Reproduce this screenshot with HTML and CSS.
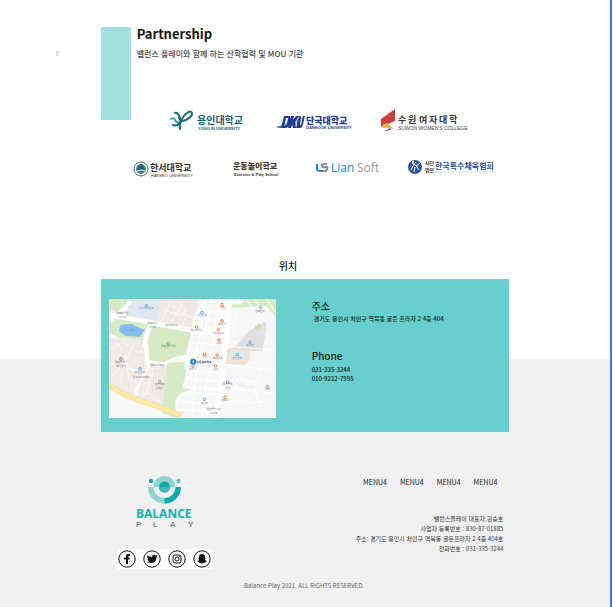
FILE: index.html
```
<!DOCTYPE html>
<html lang="ko">
<head>
<meta charset="utf-8">
<title>Balance Play</title>
<link rel="stylesheet" href="styles.css">
</head>
<body>
<main>
  <section class="partners wrap">
    <span class="stray">▯</span>
    <header class="intro">
      <div class="block"></div>
      <div>
        <h1>Partnership</h1>
        <p class="lead">밸런스 플레이와 함께 하는 산학협력 및 MOU 기관</p>
      </div>
    </header>
    <div class="logos first">
      <svg width="76" height="24" viewBox="0 0 76 24" role="img" aria-label="용인대학교">
        <g fill="none" stroke-linecap="round"><path d="M1 11q3-2 4 1t5 2" stroke="#38a3ae" stroke-width="2"/><path d="M3 17q5 2 8-4t6-8q4-3 5 0t-6 7q-5 2-7-2M12 12q-3 4-2 9" stroke="#126c80" stroke-width="2"/><path d="M5 5q3-1 5 5" stroke="#126c80" stroke-width="2"/></g>
        <text x="27" y="16" font-size="10" font-weight="700" fill="#176477">용인대학교</text>
        <text class="sub" x="28" y="22" font-size="4" font-weight="700" fill="#176477">YONG IN UNIVERSITY</text>
      </svg>
      <svg width="73" height="24" viewBox="0 0 73 24" role="img" aria-label="단국대학교">
        <path d="M0 20q5-5 14-7T27 8q-2 4-8 8T0 20Z" fill="#9eaed8"/>
        <path fill-rule="evenodd" d="M7 8h6q1 1 0 6l-1 3q-1 3-3 3H4ZM9 10 7 18h1l2-2 1-6Z" fill="#1d3c92"/>
        <path d="M14 8h3l-1 4 3-4h3l-4 6 1 6h-3l-1-4-1 4h-3ZM22 8h2l-1 9h1l2-9h2l-2 8q-1 4-3 4h-4Z" fill="#1d3c92"/><path d="M0 19h6" stroke="#1d3c92"/>
        <text x="29" y="16" font-size="9" font-weight="900" fill="#1d3c92">단국대학교</text>
        <text class="sub" x="29" y="21" font-size="4" font-weight="700" fill="#1d3c92">DANKOOK UNIVERSITY</text>
      </svg>
      <svg width="79" height="24" viewBox="0 0 79 24" role="img" aria-label="수원여자대학">
        <path d="M0 11 14 1v12L0 19Z" fill="#cc3f3e"/><path d="m1 17 5-2 7 6q-6-2-11-1Z" fill="#e9b43b"/><path d="m3 23 7-3q1 3-7 3Z" fill="#7b3c90"/>
        <text y="15" font-size="9" font-weight="700" fill="#333"><tspan x="17">수</tspan><tspan x="27">원</tspan><tspan x="38">여</tspan><tspan x="48">자</tspan><tspan x="58">대</tspan><tspan x="68">학</tspan></text>
        <text class="sub" x="17" y="22" font-size="5" fill="#444">SUWON WOMEN'S COLLEGE</text>
      </svg>
    </div>
    <div class="logos second">
      <svg width="62" height="20" viewBox="0 0 62 20" role="img" aria-label="한서대학교">
        <circle cx="8" cy="11" r="7" fill="#fff" stroke="#397862"/><circle cx="8" cy="11" r="5" fill="#3a846b"/><path d="m4 12 4-6 4 6-4 2Z" fill="#2a5a92"/><path d="M4 13q4-2 8 0" stroke="#fff" fill="none"/>
        <text x="17" y="13" font-size="9" font-weight="700" fill="#333">한서대학교</text>
        <text class="sub" x="18" y="19" font-size="4" fill="#333">HANSEO UNIVERSITY</text>
      </svg>
      <svg width="45" height="20" viewBox="0 0 45 20" role="img" aria-label="운동놀이학교">
        <text x="0" y="11" font-size="8" font-weight="900" fill="#41332f">운동놀이학교</text>
        <text class="sub" x="1" y="18" font-size="4" font-weight="700" fill="#41332f">Exercise &amp; Play School</text>
      </svg>
      <svg width="66" height="20" viewBox="0 0 66 20" role="img" aria-label="Lian Soft">
        <path d="M1 6v5q0 2 5 2" stroke="#1685bd" stroke-width="2" fill="none"/><path d="M11 6H8q-3 0-2 2t4 1 0 4H6" stroke="#83909a" stroke-width="2" fill="none"/>
        <text x="15" y="14" class="lian" font-size="12" font-weight="500" fill="#2584bd">Lian</text>
        <text x="41" y="14" class="lian" font-size="12" fill="#999">Soft</text>
      </svg>
      <svg width="88" height="20" viewBox="0 0 88 20" role="img" aria-label="사단법인 한국특수체육협회">
        <circle cx="7" cy="9" r="7" fill="#2c539c"/><path d="M3 12q2-5 5-8M4 5q5 2 7 7M8 8l4-3M7 9l-1 5" stroke="#fff" fill="none"/><circle cx="5" cy="4" r="1" fill="#fff"/>
        <text x="17" y="7" font-size="5" font-weight="700" fill="#333">사단</text><text x="17" y="14" font-size="5" font-weight="700" fill="#333">법인</text>
        <text x="27" y="11" font-size="8" font-weight="700" fill="#2852a0">한국특수체육협회</text>
        <path d="M27 14h59" stroke="#ccc" stroke-dasharray="2 1"/>
      </svg>
    </div>
  </section>

  <section class="location">
    <h2>위치</h2>
    <div class="wrap card">
      <svg class="map" viewBox="43 132 501 357" role="img" aria-label="지도">
        <path fill="#f7f7f7" d="M43 132h501v357H43Z"/>
        <path fill="#efeae5" d="M43 250h110l5 80 70 0-15 135-80-20-90-62ZM198 132h117l-20 90-105-20Z"/>
        <path fill="#dfe7ef" d="M105 132h93l-9 68-95-18Z"/>
        <path fill="#e1dfdf" d="m513 198 2 20-12 70-118 1 38-15 40-45Z"/><path fill="#c8ddbc" d="m480 215 14-10 7 10-9 10Z"/>
        <path fill="#f1e2d5" d="m393 282 74 3v28l-15 16-62-3Z"/><path fill="#dfe9ef" d="M410 290h40v25h-40Z"/>
        <g fill="none" stroke="#fff">
          <path stroke-width="4" d="m317 165 80 10M305 190l90 10M298 216l94 10M290 263l92 7M287 289l100 9M280 320l98 9M278 345l96 9M274 370l95 9M270 395l98 9M250 440l116 8M250 463l113 8M350 132l-50 253-7 104M376 135l-45 280-9 74M325 190l-38 180"/>
          <path stroke-width="3" d="m396 274 148 12M390 330l154 15M376 370l130 12M376 399l168 17M370 440l145 2M435 132l-30 130M500 330l-20 65 15 60"/>
          <path stroke-width="2" d="m43 280 45-18 40 30 25-5M43 330l50-25 10 70 60 10M50 365l35-40 35 22 60-7M65 260l30 45-20 80M120 265l-35 70 95 28M100 420l65-5 30 27M175 350l-25 75M215 142l75 45M230 132l-27 60M270 132l-43 75M205 167l95 20M245 132l30 40-12 45"/>
        </g>
        <g fill="none" stroke="#ddd9d3"><path d="m50 250 35 20 5 45-40 5M105 290l45 15-10 50-40-5M70 370l30 10 5 30M180 345l30 8-4 65-34-11ZM210 140l20 10-10 30 30 12M260 140l30 15-20 30M405 255l55-10 25-30M396 345l35 45 53 7M430 370l60 80"/></g>
        <path fill="#d7eac6" d="M43 132h57l-20 45-37-15ZM70 190l100 17-20 47-80-6-27-18v-25ZM174 212l117 20-20 72q-38 3-60 18l-48-6-10-50ZM220 322l60 0-17 78 28 2-30 12q-18 20-14 75l-45-14ZM325 132h20l-20 12-12 48ZM405 148h36l10-16h93v55l-30-34-50 2-32 3h-27Z"/>
        <path stroke="#f7f7f7" stroke-width="4" d="m455 135 35 40M480 132l35 50M515 132l29 40"/>
        <path fill="#83bdeb" d="m78 210 30-4 42 19-14 20-42-2-22-15Z"/>
        <g fill="none" stroke="#fff">
          <path stroke-width="14" d="m43 180 126 23 117 22 110 12M406 132l-12 130-30 227M170 205q-26 50-15 75l4 50"/>
          <path stroke-width="8" d="M336 132q-36 40-43 95l-20 116M155 328q50 6 80-16 20-10 50-8M164 332l-28 50-26 62M250 489l-4-45q4-30 40-29l90 3M110 140l-60 50"/>
        </g>
        <path d="M43 391q50 35 110 52t105 39" fill="none" stroke="#e4cc77" stroke-width="15"/><path d="M43 391q50 35 110 52t105 39" fill="none" stroke="#ffe9a5" stroke-width="13"/>
        <g fill="none" stroke-width="3">
          <g stroke="#e58b54"><circle cx="382" cy="149" r="4"/><circle cx="382" cy="198" r="4"/><circle cx="306" cy="216" r="4"/><circle cx="371" cy="224" r="4"/><circle cx="373" cy="255" r="4"/><circle cx="330" cy="297" r="4"/><circle cx="368" cy="300" r="4"/><circle cx="363" cy="333" r="4"/><circle cx="295" cy="333" r="4"/><circle cx="391" cy="427" r="4"/></g>
          <g stroke="#70a5dd"><circle cx="155" cy="152" r="4"/><circle cx="322" cy="173" r="4"/><circle cx="497" cy="158" r="4"/><circle cx="428" cy="299" r="4"/><circle cx="399" cy="381" r="4"/><circle cx="136" cy="342" r="4"/><circle cx="329" cy="433" r="4"/><circle cx="466" cy="262" r="4"/></g>
          <g stroke="#a09184"><circle cx="79" cy="312" r="4"/><circle cx="195" cy="380" r="4"/><circle cx="519" cy="395" r="4"/></g><circle cx="221" cy="266" r="4" stroke="#72b45e"/>
        </g>
        <g font-size="8" fill="#777" text-anchor="middle">
          <text x="155" y="162" fill="#6090bd">용인초등학교</text><text x="322" y="184" fill="#6090bd">어린이집</text><text x="497" y="170">문화센터</text><text x="83" y="178">역북소공원</text><text x="83" y="190">사거리</text><text x="173" y="206">역북지구</text><text x="173" y="218">사거리</text><text x="229" y="214">명지대입구</text><text x="105" y="228" fill="#5e96cc">호수공원</text><text x="221" y="277" fill="#55964b">역북근린공원</text><text x="306" y="227">용인세무서</text><text x="371" y="237">골든프라자</text><text x="382" y="160">카페</text><text x="382" y="209">음식점</text><text x="373" y="266">은행</text><text x="330" y="307">약국</text><text x="370" y="311">베이커리</text><text x="428" y="311">처인구청</text><text x="466" y="272">명지대</text><text x="79" y="323">역북동행정</text><text x="79" y="335">복지센터</text><text x="187" y="332">역북초등학교</text><text x="136" y="353">어린이집</text><text x="140" y="369">푸르지오아파트</text><text x="195" y="390">용인역북</text><text x="195" y="402">아파트</text><text x="295" y="344">미용실</text><text x="363" y="344">식당</text><text x="399" y="391">용인병원</text><text x="399" y="403">의원</text><text x="391" y="438">편의점</text><text x="329" y="446">주유소</text><text x="358" y="465">용인중앙시장</text><text x="358" y="477">사거리</text><text x="519" y="406">빌라</text>
        </g>
        <rect x="287" y="309" width="68" height="22" rx="11" fill="#fff" stroke="#a9c9eb"/><circle cx="296" cy="320" r="9" fill="#147be5"/><path d="M296 315v10m-4-6q4 5 8 0" stroke="#fff" stroke-width="2" fill="none"/><text x="306" y="323" font-size="8" font-weight="700" fill="#222">운동놀이학교</text>
      </svg>
      <div class="contact">
        <h3>주소</h3>
        <p class="address">경기도 용인시 처인구 역북동 골든 프라자 2 4층 404</p>
        <h3>Phone</h3>
        <p>031-335-3244<br>010-9212-7995</p>
      </div>
    </div>
  </section>

  <footer>
    <div class="wrap columns">
      <div class="brand">
        <svg width="60" height="54" viewBox="0 0 60 54" role="img" aria-label="Balance Play">
          <path d="M17.500 11a11 11 0 0 1 22 0Z" fill="#91d2ca"/>
          <path d="M12 11h33a16.500 16.500 0 0 1-33 0Z" fill="#91d2ca"/><path d="M28.500 11H45a16.500 16.500 0 0 1-16.500 16.500Z" fill="#08ada9"/>
          <path d="M17.500 11h22a11 11 0 0 1-22 0Z" fill="#f1f1f1"/>
          <circle cx="28.500" cy="11" r="5.500" fill="#08ada9"/><path d="M23 11a5.500 5.500 0 0 0 11 0Z" fill="#3fb9b3"/><circle cx="15" cy="5" r="2.200" fill="#08ada9"/><circle cx="42.500" cy="5" r="2.200" fill="#6ac4bd"/>
          <text class="wordmark" x="0" y="42" font-size="12" font-weight="700" fill="#17b2ac">BALANCE</text>
          <text class="sub" y="51" font-size="8" font-weight="700" fill="#77879a"><tspan x="0">P</tspan><tspan x="17">L</tspan><tspan x="34">A</tspan><tspan x="52">Y</tspan></text>
        </svg>
        <nav class="social" aria-label="SNS">
          <a href="#" aria-label="Facebook"><svg viewBox="0 0 18 18"><circle cx="9" cy="9" r="8.200"/><path d="M8 14V9.500H6V7.500h2V6q0-2 2-2h2v2h-1q-1 0-1 1v.5h2l-.5 2H10V14Z"/></svg></a>
          <a href="#" aria-label="Twitter"><svg viewBox="0 0 18 18"><circle cx="9" cy="9" r="8.200"/><path d="M4 5q2 2 5 2 0-3 3-2l1 .5 1.500-.5-1 2q0 6-6 6-2 0-4-1 2 0 3-1-2 0-2-2h1Q4 8 4 5Z"/></svg></a>
          <a href="#" aria-label="Instagram"><svg viewBox="0 0 18 18"><circle cx="9" cy="9" r="8.200"/><rect class="line" x="5" y="5" width="8" height="8" rx="2"/><circle class="line" cx="9" cy="9" r="2"/><circle class="dot" cx="11.500" cy="6.500" r=".6"/></svg></a>
          <a href="#" aria-label="Snapchat"><svg viewBox="0 0 18 18"><circle cx="9" cy="9" r="8.200"/><path d="M9 4q3 0 3 3v1l1 .5-1 1q1 2 2 2l-2 1q-1 0-1 .5-2 0-2 1-1-1-2-1-.5-.5-1-.5l-2-1q1 0 2-2l-1-1L6 8V7q0-3 3-3Z"/></svg></a>
        </nav>
      </div>
      <div class="info">
        <nav class="menu"><a href="#">MENU4</a><a href="#">MENU4</a><a href="#">MENU4</a><a href="#">MENU4</a></nav>
        <p>밸런스플레이 대표자:김승호<br>사업자 등록번호 : 830-87-01885<br>주소: 경기도 용인시 처인구 역북동 골든프라자 2 4층 404호<br>전화번호 : 031-335-3244</p>
      </div>
    </div>
    <p class="copy">Balance Play 2021. ALL RIGHTS RESERVED.</p>
  </footer>
</main>
</body>
</html>
```
FILE: styles.css
```
* { box-sizing: border-box; }
body { margin: 0; background: #fff; color: #151515; font-family: "Noto Sans CJK KR", "Noto Sans", sans-serif; }
main { display: flex; flex-direction: column; min-height: 100vh; border-right: 2px solid #2f80ed; margin-right: 1px; overflow: hidden; }
h1, h2, h3, p { margin: 0; }
a { color: inherit; text-decoration: none; }
svg { display: block; flex: none; }
.wrap { width: 67%; min-width: 408px; margin: 0 auto; }

.partners { position: relative; padding-top: 27px; }
.stray { position: absolute; left: -45px; top: 50px; font-size: 5px; line-height: 6px; color: #555; }
.intro { display: flex; gap: 6px; }
.block { width: 30px; height: 93px; background: #a3e1df; }
h1 { font-size: 13px; line-height: 14px; font-weight: 700; }
.lead { margin-top: 7px; font-size: 8px; line-height: 12px; font-weight: 500; color: #444; }
.logos { display: flex; }
.logos svg { overflow: visible; }
.first { margin: -12px 0 0 69px; gap: 31px; }
.second { margin: 26px 0 0 32px; gap: 38px; }
.second svg:last-child { margin-left: -12px; }
.lian { font-family: "Open Sans", sans-serif; }
.sub { font-family: "Liberation Sans", sans-serif; }

.location { margin-top: 80px; background: linear-gradient(#fff 101px, #f1f1f1 101px); }
h2 { padding-right: 34px; text-align: center; font-size: 10px; line-height: 16px; font-weight: 500; }
.card { display: flex; gap: 36px; margin-top: 5px; padding: 20px 8px 14px; background: #67d0cc; }
.map { width: 41%; min-width: 167px; height: auto; }
h3 { font-size: 10px; line-height: 14px; font-weight: 500; }
.contact p { font-size: 6px; line-height: 9px; margin-top: 2px; font-weight: 500; }
.contact .address { margin: 1px 0 26px 2px; }

footer { flex: 1; padding-top: 44px; background: #f1f1f1; }
.columns { display: flex; justify-content: space-between; padding: 0 6px 0 16px; }
.brand { display: flex; flex-direction: column; gap: 19px; }
.brand > svg { margin-left: 19px; }
.wordmark { font-family: "Open Sans", sans-serif; }
.social { display: flex; gap: 7px; padding: 1px; background: #fff; }
.social svg { width: 18px; height: 18px; fill: #111; }
.social circle, .social .line { fill: none; stroke: #111; }
.social .dot { fill: #111; stroke: none; }
.menu { display: flex; justify-content: flex-end; gap: 13px; padding-right: 6px; font-size: 7px; line-height: 12px; }
.info p { margin-top: 26px; text-align: right; font-size: 6px; line-height: 10px; color: #333; }
.copy { margin-top: 12px; padding-right: 2px; text-align: center; font-size: 6px; line-height: 10px; color: #666; }
```
